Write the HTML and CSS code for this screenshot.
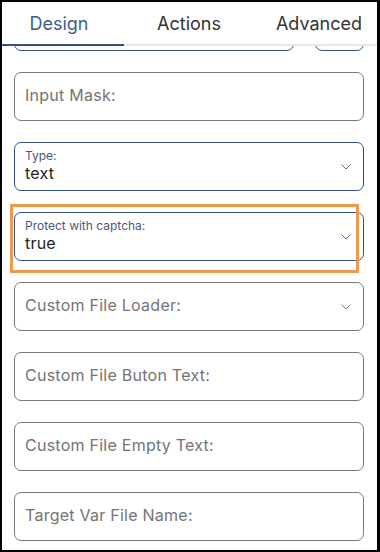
FILE: index.html
```html
<!DOCTYPE html>
<html lang="en">
<head>
  <meta charset="UTF-8" />
  <meta name="viewport" content="width=device-width, initial-scale=1.0"/>
  <title>Field properties</title>
  <link rel="stylesheet" href="styles.css">
</head>
<body>

  <div class="panel">
    <div class="tabs">
      <div class="tab active">Design</div>
      <div class="tab">Actions</div>
      <div class="tab">Advanced</div>
    </div>

    <div class="fields">
      <div class="row-split">
        <div class="field filled"></div>
        <div class="field filled"></div>
      </div>

      <div class="field">
        <span class="placeholder">Input Mask:</span>
      </div>

      <div class="field filled select">
        <div class="stack">
          <span class="label">Type:</span>
          <span class="value">text</span>
        </div>
        <svg class="chevron" viewBox="0 0 10 6"><path d="M0.5 0.5 L5 5 L9.5 0.5"/></svg>
      </div>

      <div class="highlight-wrap">
        <div class="field filled select">
          <div class="stack">
            <span class="label">Protect with captcha:</span>
            <span class="value">true</span>
          </div>
          <svg class="chevron" viewBox="0 0 10 6"><path d="M0.5 0.5 L5 5 L9.5 0.5"/></svg>
        </div>
        <div class="highlight"></div>
      </div>

      <div class="field select">
        <span class="placeholder">Custom File Loader:</span>
        <svg class="chevron gray" viewBox="0 0 10 6"><path d="M0.5 0.5 L5 5 L9.5 0.5"/></svg>
      </div>

      <div class="field">
        <span class="placeholder">Custom File Buton Text:</span>
      </div>

      <div class="field">
        <span class="placeholder">Custom File Empty Text:</span>
      </div>

      <div class="field">
        <span class="placeholder">Target Var File Name:</span>
      </div>
    </div>
  </div>

</body>
</html>
```

FILE: styles.css
```css
* {
  box-sizing: border-box;
}
body {
  margin: 0;
  font-family: 'Inter', 'Noto Sans', sans-serif;
  background: #fff;
}
.panel {
  position: relative;
  width: 380px;
  height: 552px;
  border: 2px solid #000;
  border-right-width: 3px;
  overflow: hidden;
  background: #fff;
}
.tabs {
  position: absolute;
  top: 0;
  left: -8px;
  right: 0;
  height: 44px;
  display: flex;
  background: #fff;
  border-bottom: 2px solid #e6e6e6;
  z-index: 2;
}
.tab {
  flex: 0 0 130px;
  display: flex;
  align-items: center;
  justify-content: center;
  font-size: 18px;
  color: #333;
  margin-bottom: -2px;
  border-bottom: 2px solid transparent;
}
.tab.active {
  color: #3d5d92;
  border-bottom-color: #2f5088;
}
.fields {
  display: flex;
  flex-direction: column;
  gap: 21px;
  padding: 0 13px 0 12px;
}
.row-split {
  display: grid;
  grid-template-columns: 1fr 49px;
  gap: 21px;
}
.field {
  height: 49px;
  border: 1px solid #7a7a7a;
  border-radius: 7px;
  display: flex;
  align-items: center;
  padding: 0 12px 0 10px;
  background: #fff;
}
.field.filled {
  border-color: #34528a;
}
.placeholder {
  font-size: 16px;
  letter-spacing: 0.25px;
  color: #747474;
  margin-top: -3px;
}
.stack {
  display: flex;
  flex-direction: column;
  margin-top: -3px;
}
.label {
  font-size: 12px;
  line-height: 15px;
  color: #4a5878;
}
.value {
  font-size: 16px;
  line-height: 20px;
  letter-spacing: 0.2px;
  color: #222;
}
.chevron {
  width: 10px;
  height: 6px;
  margin-left: auto;
  fill: none;
  stroke: #4d6a9c;
  stroke-width: 1;
}
.chevron.gray {
  stroke: #7a7a7a;
}
.highlight-wrap {
  position: relative;
}
.highlight {
  position: absolute;
  top: -8px;
  bottom: -12px;
  left: -4px;
  right: 5px;
  border: 3px solid #f0994d;
}
```
